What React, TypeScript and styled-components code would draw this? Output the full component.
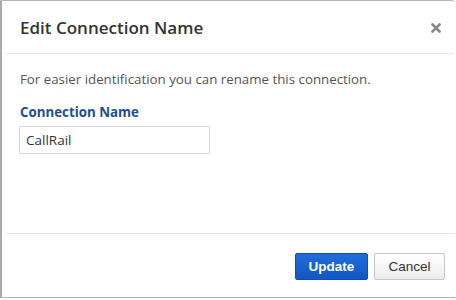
import React, { useState } from 'react';
import styled, { createGlobalStyle } from 'styled-components';

const GlobalStyle = createGlobalStyle`
  html, body {
    margin: 0;
    padding: 0;
    background: #fff;
  }
  * {
    box-sizing: border-box;
  }
`;

const Modal = styled.div`
  width: 456px;
  height: 298px;
  display: flex;
  flex-direction: column;
  background: #fff;
  border: 1px solid #b5b5b5;
  border-left: 2px solid #aaa;
  border-right-color: #fff;
  border-radius: 0 5px 0 0;
  padding-left: 3px;
  font-family: 'Open Sans', 'Noto Sans', sans-serif;
`;

const Header = styled.div`
  height: 53px;
  display: flex;
  align-items: center;
  justify-content: space-between;
  padding: 0 13px 0 15px;
  border-bottom: 1px solid #e6e6e6;
  border-radius: 0 0 3px 3px;
  box-shadow: 0 1px 1px rgba(0, 0, 0, 0.03);
`;

const Title = styled.h3`
  margin: 0;
  font-size: 17px;
  font-weight: 600;
  color: #333;
`;

const CloseButton = styled.button`
  border: none;
  background: none;
  padding: 0;
  width: 12px;
  height: 12px;
  display: flex;
  align-items: center;
  justify-content: center;
  cursor: pointer;
  margin-top: 1px;
`;

const Body = styled.div`
  flex: 1;
  padding: 16px 14px 0 14px;
`;

const Intro = styled.p`
  margin: 0 0 15px 1px;
  font-size: 13.3px;
  line-height: 18px;
  color: #555;
`;

const Label = styled.label`
  display: block;
  margin: 0 0 5px 1px;
  font-size: 13.3px;
  line-height: 18px;
  font-weight: 700;
  color: #1f4f91;
`;

const Input = styled.input`
  width: 191px;
  height: 28px;
  padding: 0 6px;
  border: 1px solid #d4d4d4;
  border-radius: 2px;
  font-family: 'Open Sans', 'Noto Sans', sans-serif;
  font-size: 13.5px;
  color: #333;
  outline: none;
`;

const Footer = styled.div`
  height: 64px;
  display: flex;
  justify-content: flex-end;
  align-items: flex-start;
  gap: 6px;
  padding: 19px 10px 0 0;
  border-top: 1px solid #e6e6e6;
`;

const Button = styled.button<{ $primary?: boolean }>`
  height: 27px;
  padding: 0;
  width: ${p => (p.$primary ? '73px' : '71px')};
  border-radius: 2px;
  font-family: 'Liberation Sans', Arial, sans-serif;
  font-size: 13.5px;
  cursor: pointer;
  ${p =>
    p.$primary
      ? `
    background: linear-gradient(#1f6ddb, #1257c4);
    border: 1px solid #0d4fae;
    color: #fff;
    font-weight: 700;
  `
      : `
    background: linear-gradient(#ffffff, #ececec);
    border: 1px solid #c6c6c6;
    color: #333;
    font-weight: 400;
  `}
`;

export default function App() {
  const [name, setName] = useState('CallRail');

  return (
    <>
      <GlobalStyle />
      <Modal>
        <Header>
          <Title>Edit Connection Name</Title>
          <CloseButton aria-label="Close">
            <svg width="10" height="10" viewBox="0 0 10 10">
              <path d="M1.5 1.5L8.5 8.5M8.5 1.5L1.5 8.5" stroke="#8a8a8a" strokeWidth="2.6" strokeLinecap="square" />
            </svg>
          </CloseButton>
        </Header>
        <Body>
          <Intro>For easier identification you can rename this connection.</Intro>
          <Label htmlFor="connName">Connection Name</Label>
          <Input id="connName" value={name} onChange={e => setName(e.target.value)} />
        </Body>
        <Footer>
          <Button $primary>Update</Button>
          <Button>Cancel</Button>
        </Footer>
      </Modal>
    </>
  );
}
